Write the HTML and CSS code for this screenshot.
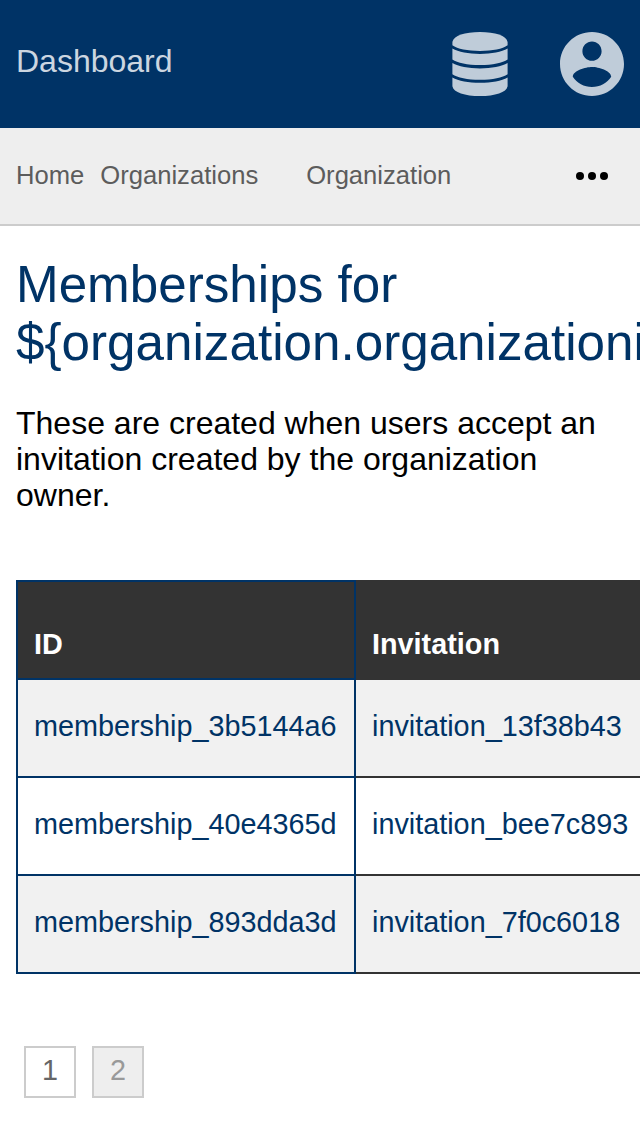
FILE: index.html
```html
<!DOCTYPE html>
<html lang="en">
<head>
<meta charset="utf-8">
<title>Memberships</title>
<link rel="stylesheet" href="styles.css">
</head>
<body>
<header class="header">
  <a class="brand">Dashboard</a>
  <div class="tools">
    <svg class="database" viewBox="0 0 56 64">
      <path d="M.4 10C1.400 3.600 13 0 28 0s26.600 3.600 27.600 10v3.300c-5 3.600-15 5.700-27.600 5.700S5.400 16.900.4 13.300z"/>
      <path d="M.4 16.600c6 3.500 16 5.300 27.600 5.300s21.600-1.800 27.600-5.300v11c-5 3.500-15 5.500-27.600 5.500S5.400 31.100.4 27.600z"/>
      <path d="M.4 31c6 3.500 16 5.400 27.600 5.400s21.600-1.900 27.600-5.400v11.200c-5 3.500-15 5.500-27.600 5.500S5.400 45.700.4 42.200z"/>
      <path d="M.4 45.400c6 3.500 16 5.300 27.600 5.300s21.600-1.800 27.600-5.300v8.800C54.600 60.400 43 64 28 64S1.400 60.400.4 54.200z"/>
    </svg>
    <svg class="account" viewBox="2 2 20 20">
      <path d="M12 2C6.480 2 2 6.480 2 12s4.480 10 10 10 10-4.480 10-10S17.520 2 12 2zm0 3c1.660 0 3 1.340 3 3s-1.340 3-3 3-3-1.340-3-3 1.340-3 3-3zm0 14.200c-2.500 0-4.710-1.280-6-3.220.03-1.990 4-3.080 6-3.080 1.990 0 5.970 1.090 6 3.080-1.290 1.940-3.500 3.220-6 3.220z"/>
    </svg>
  </div>
</header>
<nav class="navbar">
  <a class="crumb">Home</a>
  <a class="crumb crumb-wide">Organizations</a>
  <a class="crumb">Organization</a>
  <svg class="more" viewBox="0 0 32 8"><circle cx="4" cy="4" r="4"/><circle cx="16" cy="4" r="4"/><circle cx="28" cy="4" r="4"/></svg>
</nav>
<main class="content">
  <h1 class="title">Memberships for ${organization.organizationi</h1>
  <p class="intro">These are created when users accept an invitation created by the organization owner.</p>
  <table class="data">
    <thead>
      <tr><th>ID</th><th>Invitation</th></tr>
    </thead>
    <tbody>
      <tr><td>membership_3b5144a6</td><td>invitation_13f38b43</td></tr>
      <tr><td>membership_40e4365d</td><td>invitation_bee7c893</td></tr>
      <tr><td>membership_893dda3d</td><td>invitation_7f0c6018</td></tr>
    </tbody>
  </table>
  <div class="pages">
    <a class="page">1</a>
    <a class="page page-off">2</a>
  </div>
</main>
</body>
</html>
```
FILE: styles.css
```css
* { box-sizing: border-box; }

body {
  margin: 0;
  height: 1136px;
  overflow: hidden;
  background: #fff;
  color: #000;
  font-family: "Liberation Sans", Arial, sans-serif;
  font-size: 32px;
}

.header {
  display: flex;
  align-items: center;
  justify-content: space-between;
  height: 128px;
  padding: 0 16px;
  background: #036;
}

.brand {
  padding-bottom: 6px;
  line-height: 36px;
  color: #ccd6e0;
}

.tools {
  display: flex;
  gap: 52px;
  fill: #bfccd9;
}

.database { width: 56px; height: 64px; }
.account { width: 64px; height: 64px; }

.navbar {
  display: flex;
  align-items: center;
  gap: 16px;
  height: 98px;
  padding: 0 32px 0 16px;
  border-bottom: 2px solid #ccc;
  background: #eee;
}

.crumb {
  padding-bottom: 2px;
  color: #5c5c5c;
  font-size: 25.6px;
  line-height: 30px;
}

.crumb-wide { margin-right: 32px; }

.more {
  width: 32px;
  height: 8px;
  margin-left: auto;
}

.content {
  overflow: hidden;
  padding: 30px 0 0 16px;
}

.title {
  margin: 0;
  color: #036;
  font-size: 51.2px;
  font-weight: 400;
  line-height: 58px;
}

.intro {
  margin: 33px 16px 67px 0;
  line-height: 36px;
}

.data {
  width: 700px;
  border-collapse: collapse;
  table-layout: fixed;
  font-size: 28.8px;
  line-height: 32px;
}

.data th,
.data td {
  height: 98px;
  padding: 0 16px;
  border: 2px solid #333;
  text-align: left;
  white-space: nowrap;
}

.data th:first-child,
.data td:first-child {
  width: 338px;
  border-color: #036;
}

.data th {
  padding-top: 28px;
  background: #333;
  color: #fff;
}

.data td {
  padding-bottom: 4px;
  color: #036;
}

.data tbody tr:nth-child(odd) { background: #f1f1f1; }

.pages {
  display: flex;
  gap: 16px;
  padding: 72px 8px 0;
}

.page {
  width: 52px;
  height: 52px;
  border: 2px solid #ccc;
  color: #666;
  font-size: 28.8px;
  line-height: 44px;
  text-align: center;
}

.page-off {
  background: #eee;
  color: #999;
}
```
